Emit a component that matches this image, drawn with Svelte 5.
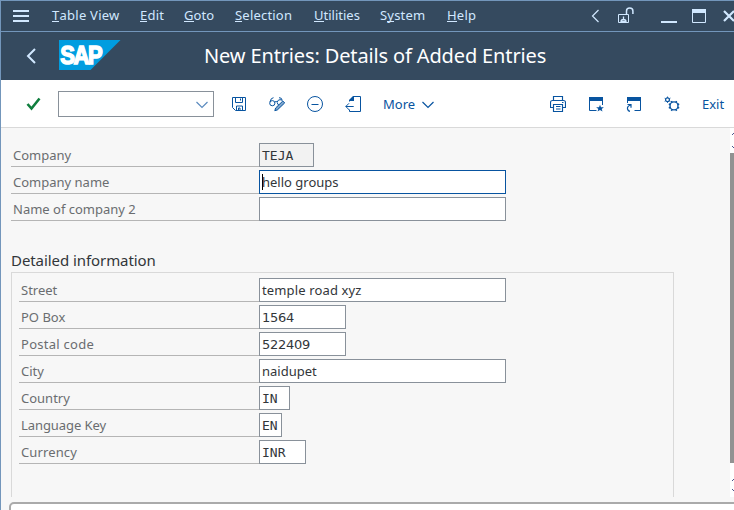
<script>
  const menus = [
    { text: 'Table View', key: 0, width: 88, spacing: 0.25 },
    { text: 'Edit', key: 0, width: 44, spacing: 0.25 },
    { text: 'Goto', key: 0, width: 51, spacing: 0.1 },
    { text: 'Selection', key: 0, width: 79, spacing: 0.2 },
    { text: 'Utilities', key: 0, width: 66, spacing: 0 },
    { text: 'System', key: 1, width: 67, spacing: 0.2 },
    { text: 'Help', key: 0, width: 40, spacing: 0.2 }
  ];

  const companyFields = [
    { label: 'Company', value: 'TEJA', width: 55, kind: 'mono readonly' },
    { label: 'Company name', value: 'hello groups', width: 247, kind: 'focused' },
    { label: 'Name of company 2', value: '', width: 247, kind: '' }
  ];

  const detailFields = [
    { label: 'Street', value: 'temple road xyz', width: 247, kind: 'wide' },
    { label: 'PO Box', value: '1564', width: 87, kind: 'digits' },
    { label: 'Postal code', value: '522409', width: 87, kind: 'digits', spacing: 0.27 },
    { label: 'City', value: 'naidupet', width: 247, kind: '' },
    { label: 'Country', value: 'IN', width: 31, kind: 'mono' },
    { label: 'Language Key', value: 'EN', width: 23, kind: 'mono', spacing: -0.08 },
    { label: 'Currency', value: 'INR', width: 47, kind: 'mono', spacing: 0.12 }
  ];
</script>

{#snippet field(item)}
  <div class="row">
    <span class="label" style="letter-spacing: {item.spacing ?? 0}px">{item.label}</span>
    <div class="input {item.kind}" style="width: {item.width}px">
      {#if item.kind === 'focused'}<i class="caret"></i>{/if}<span>{item.value}</span>
    </div>
  </div>
{/snippet}

<div class="window">
  <nav class="menubar">
    <svg class="burger" width="16" height="12" viewBox="0 0 16 12"><path d="M0 1h16M0 6h16M0 11h16" stroke="#d1e8ff" stroke-width="2" /></svg>
    {#each menus as m}
      <span class="menu" style="width: {m.width}px; letter-spacing: {m.spacing}px">{m.text.slice(0, m.key)}<span class="key">{m.text[m.key]}</span>{m.text.slice(m.key + 1)}</span>
    {/each}
    <svg class="controls" width="146" height="30" viewBox="588 1 146 30" fill="none" stroke="#d1e8ff">
      <path d="M598.5 10l-6 6 6 6" stroke-width="1.2" />
      <path d="M618.5 14.500h10v8h-10z" />
      <path d="M626.500 14.500v-3.500q0-3 3.200-3t3.200 3v3" stroke-width="1.500" />
      <path d="M623.500 16.500v2.500M621 21.500q0-2 2.500-2t2.500 2z" stroke-width="1.300" />
      <path d="M661 22h16" stroke-width="2" />
      <path d="M692.500 9.500h13v13h-13z" />
      <path d="M692 11h14" stroke-width="4" />
      <path d="M724 11l10 10M734 11l-10 10" stroke-width="2.200" />
    </svg>
  </nav>

  <header class="titlebar">
    <svg class="back" width="12" height="18" viewBox="0 0 12 18"><path d="M10 2L3 9l7 7" fill="none" stroke="#d1e8ff" stroke-width="2" /></svg>
    <svg class="logo" width="62" height="30" viewBox="0 0 62 30">
      <path d="M0 0h61.500L31.500 30H0z" fill="#009de0" />
      <text transform="translate(1.200 23.500) scale(.88 1)">SAP</text>
    </svg>
    <h1>New Entries: Details of Added Entries</h1>
  </header>

  <div class="toolbar">
    <svg class="check" width="16" height="14" viewBox="0 0 16 14"><path d="M1.500 7L5.500 11.500 13.500 1.500" fill="none" stroke="#107e3e" stroke-width="2.600" /></svg>
    <div class="command">
      <svg width="12" height="8" viewBox="0 0 12 8"><path d="M.5 1l5.500 5.500L11.500 1" fill="none" stroke="#5b8bbf" stroke-width="1.200" /></svg>
    </div>
    <div class="icons left">
      <svg viewBox="0 0 16 16"><path d="M1.500 1.500h13v13h-10l-3-3zM4.500 1.500v5h7v-5M9.500 2.500v2M5.500 14.500v-4.500h6v4.500M7.500 14v-2h1.500v2" /></svg>
      <svg viewBox="0 0 16 16"><circle cx="3.300" cy="7.200" r="2.600" /><path d="M5.800 6q1.300-1 2.500 0M8.300 6.500q0 2.300 2 2.700M8.300 6q.5-2.300 2.700-2.300 1.500 0 2.200 1M1 6q.8-4.300 3.500-4.300M10 1.700q2.800-.3 3.300 2.800" /><path d="M5.800 14.700l.8-2.700L13.800 5l1.900 1.900-7.300 7z" fill="#7fa6cc" /></svg>
      <svg viewBox="0 0 16 16"><circle cx="8" cy="8" r="7.500" /><path d="M4.500 8.500h7" /></svg>
      <svg viewBox="0 0 16 16"><path d="M4.500 5.500v-1l4-4h7v15h-11v-2M.7 10.500h8M4 7.300L.8 10.500 4 13.700" /><path d="M4 5V4l4-4h1v5z" fill="#0854a0" stroke="none" /></svg>
    </div>
    <span class="more">More</span>
    <svg class="moredown" width="12" height="8" viewBox="0 0 12 8"><path d="M.5 1l5.500 5.500L11.500 1" fill="none" stroke="#0854a0" stroke-width="1.200" /></svg>
    <div class="icons right">
      <svg viewBox="0 0 16 16"><path d="M3.500 4V.5h9V4M3.500 11.500H.5v-5q0-2 2-2h11q2 0 2 2v5h-3M3.500 8.500h9v7h-9zM6 10.500h4.500M6 13h4.500M12 6.500h1.500" stroke-width="1.150" /></svg>
      <svg viewBox="0 0 16 16"><path d="M1.500 3v11.500h7M14.500 3v6" /><path d="M1 1h14v4H1zM12 8.800l1 2.400h2.900l-2.200 1.700.8 2.700-2.500-1.500-2.500 1.500.8-2.700L8.100 11.200H11z" fill="#0854a0" stroke="none" /></svg>
      <svg viewBox="0 0 16 16"><path d="M1.500 3v4M14.500 3v11.500H8.500" /><path d="M1 1h14v4H1z" fill="#0854a0" stroke="none" /><path d="M4.800 9q-3.800 1-3.300 4 .5 2 2.500 2.300M1.500 8.500h3.500v3.200" stroke-width="1.200" /></svg>
      <svg viewBox="0 0 16 16"><circle cx="3.500" cy="3.700" r="1.900" stroke-width="1.200" /><path d="M3.500.6v1.200M3.500 5.600v1.200M.7 2.300l1 .6M5.400 4.700l1 .6M.7 5.300l1-.6M5.400 2.700l1-.6" /><circle cx="10" cy="9.900" r="4" stroke-width="1.400" /><path d="M8 6.300L7.400 5M12 6.300l.6-1.300M8 13.500l-.6 1.400M12 13.500l.6 1.400M6.200 8.500l-1.400-.6M13.800 8.500l1.400-.6M6.200 11.500l-1.400.6M13.800 11.500l1.400.6" stroke-width="1.500" /></svg>
    </div>
    <span class="exit">Exit</span>
  </div>

  <div class="content">
    <main>
      <section class="fields">
        {#each companyFields as item}{@render field(item)}{/each}
      </section>
      <h2>Detailed information</h2>
      <section class="fields group">
        {#each detailFields as item}{@render field(item)}{/each}
      </section>
    </main>
    <div class="scrollbar">
      <svg width="4" height="25" viewBox="0 0 4 25" fill="none" stroke="#4b568d"><path d="M2 7l2-2M2 18l2 2" /></svg>
      <div class="thumb"></div>
      <svg width="4" height="34" viewBox="0 0 4 34" fill="none" stroke="#4b568d"><path d="M2 18l2-2M2 26l2 2" /></svg>
    </div>
  </div>
  <footer></footer>
</div>

<style>
  .window {
    box-sizing: border-box;
    width: 734px;
    height: 510px;
    overflow: hidden;
    display: flex;
    flex-direction: column;
    border-top: 1px solid #7396bb;
    border-left: 1px solid #7396bb;
    background: #f7f7f7;
    font-family: 'Noto Sans', 'Open Sans', sans-serif;
    font-size: 13px;
    color: #32363a;
    white-space: nowrap;
  }
  svg { flex: none; display: block; }
  .menubar {
    height: 30px;
    flex: none;
    display: flex;
    align-items: center;
    background: #354a5f;
    border-bottom: 1px solid #7396bb;
    color: #d1e8ff;
  }
  .burger { margin: 0 23px 0 12px; }
  .menu { flex: none; line-height: 28px; padding-bottom: 2px; }
  .key {
    display: inline-block;
    height: 15px;
    line-height: 18px;
    border-bottom: 1px solid #d1e8ff;
  }
  .controls { margin-left: auto; }
  .titlebar {
    height: 48px;
    flex: none;
    display: flex;
    align-items: center;
    background: #354a5f;
    color: #fff;
  }
  .back { margin-left: 24px; }
  .logo { margin: 0 0 2px 22px; }
  .logo text {
    font: bold 25px 'Liberation Sans', sans-serif;
    letter-spacing: -1.6px;
    fill: #fff;
    stroke: #fff;
    stroke-width: 1.5px;
  }
  h1 { margin: 0 0 0 83px; font-size: 20px; line-height: 48px; font-weight: 400; letter-spacing: -0.14px; }
  .toolbar {
    height: 47px;
    flex: none;
    display: flex;
    align-items: center;
    background: #fff;
    border-bottom: 1px solid #d9d9d9;
    color: #0854a0;
  }
  .check { margin-left: 25px; }
  .command {
    box-sizing: border-box;
    width: 156px;
    height: 26px;
    margin-left: 16px;
    border: 1px solid #89919a;
    display: flex;
    align-items: center;
    justify-content: flex-end;
    padding: 2px 5px 0 0;
  }
  .icons { display: flex; gap: 22px; }
  .icons svg { width: 16px; height: 16px; fill: none; stroke: #0854a0; stroke-width: 1; }
  .left { margin-left: 17px; }
  .more { width: 39px; margin-left: 22px; }
  .moredown { margin-top: 2px; }
  .right { margin-left: 116px; }
  .exit { margin-left: 22px; }
  .content { height: 369px; flex: none; display: flex; justify-content: space-between; }
  main { width: 663px; margin-left: 10px; display: flex; flex-direction: column; }
  .fields { display: flex; flex-direction: column; gap: 3px; padding-top: 15px; }
  .row { display: flex; height: 24px; }
  .label {
    box-sizing: border-box;
    width: 248px;
    padding: 1px 0 0 2px;
    line-height: 22px;
    border-bottom: 1px solid #b5b5b5;
    color: #6a6d70;
  }
  .input {
    box-sizing: border-box;
    height: 24px;
    display: flex;
    align-items: center;
    padding-left: 2px;
    border: 1px solid #89919a;
    background: #fff;
  }
  .readonly { background: #f2f2f2; }
  .focused { border-color: #0854a0; }
  .wide { letter-spacing: 0.14px; }
  .mono { font-family: 'DejaVu Sans Mono', monospace; font-size: 13px; }
  .digits { font-family: 'DejaVu Sans', sans-serif; font-size: 13px; letter-spacing: -0.27px; }
  .caret { width: 1px; height: 16px; margin-right: -1px; background: #000; }
  h2 { margin: 27px 0 0; height: 24px; line-height: 24px; font-size: 15px; font-weight: 400; letter-spacing: -0.07px; }
  .group {
    box-sizing: border-box;
    flex: 1;
    border: 1px solid #d9d9d9;
    border-bottom: 0;
    padding: 5px 0 0 7px;
  }
  .group .label { width: 240px; }
  .scrollbar { width: 4px; display: flex; flex-direction: column; background: #fff; }
  .thumb { flex: 1; background: #929292; }
  footer {
    box-sizing: border-box;
    height: 20px;
    flex: none;
    margin: 5px -10px 0 8px;
    border: 2px solid #aaa;
    border-radius: 5px;
    background: #fff;
  }
</style>
